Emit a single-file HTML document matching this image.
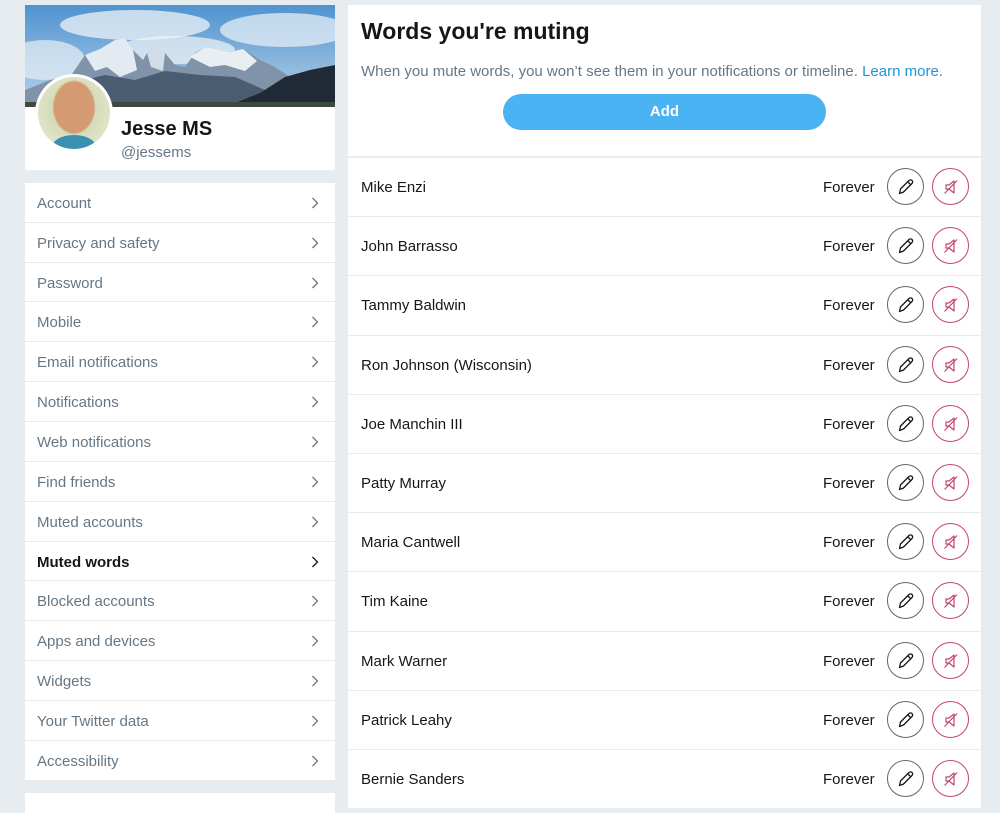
<!DOCTYPE html>
<html><head><meta charset="utf-8"><style>
*{margin:0;padding:0;box-sizing:border-box}
body{width:1000px;height:809px;background:#e6ecf0;font-family:"Liberation Sans",Arial,sans-serif;position:relative;overflow:hidden}
.abs{position:absolute}
.card{position:absolute;background:#fff}
.mi{position:absolute;left:25px;width:310px;background:#fff;font-size:15px;color:#657786;padding-left:12px}
.mi span{position:absolute;left:12px;top:12px}
.mi.b{color:#14171a;font-weight:bold}
.mi svg{position:absolute;right:16px;top:14px}
.row{position:absolute;left:348px;width:633px;background:#fff;font-size:15px;color:#14171a}
.row .n{position:absolute;left:13px;top:21px}
.row .f{position:absolute;left:475px;top:21px}
.row .e,.row .m{position:absolute;top:10px;width:37px;height:37px;border-radius:50%}
.row .e{left:539px;border:1px solid #666}
.row .m{left:584px;border:1px solid #c4446e}
.row svg{position:absolute;left:8px;top:8px}
</style></head><body>
<div class="card" style="left:25px;top:5px;width:310px;height:165px"></div>
<svg class="abs" style="left:25px;top:5px" width="310" height="102" viewBox="0 0 310 102">
<defs><linearGradient id="s" x1="0" y1="0" x2="0" y2="1"><stop offset="0" stop-color="#4f93cf"/><stop offset="1" stop-color="#b9d2e8"/></linearGradient></defs>
<rect width="310" height="102" fill="url(#s)"/>
<ellipse cx="110" cy="20" rx="75" ry="15" fill="#eef3f8" opacity=".75"/>
<ellipse cx="260" cy="25" rx="65" ry="17" fill="#e4edf5" opacity=".75"/>
<ellipse cx="150" cy="45" rx="60" ry="14" fill="#f2f5f8" opacity=".7"/>
<ellipse cx="20" cy="55" rx="40" ry="20" fill="#e8eff6" opacity=".7"/>
<polygon points="0,85 25,75 45,72 60,50 75,44 90,35 100,33 108,45 118,55 122,48 128,42 140,48 150,60 160,62 170,48 180,42 190,44 205,47 218,44 235,55 250,62 265,72 280,75 310,80 310,102 0,102" fill="#8193a8"/>
<polygon points="60,50 75,44 90,35 100,33 108,45 112,65 95,72 82,62 70,66" fill="#e3eaf1"/>
<polygon points="165,52 180,42 205,47 218,44 232,56 220,66 200,60 185,62" fill="#e9eef3"/>
<polygon points="122,48 128,42 140,48 138,66 126,62" fill="#d3dde7"/>
<polygon points="40,80 80,70 110,75 140,66 175,70 210,72 240,85 250,102 20,102" fill="#4a5c71"/>
<polygon points="200,102 235,88 260,72 285,65 310,60 310,102" fill="#1f2a36"/>
<rect y="97" width="310" height="5" fill="#3b4a3d"/>
</svg>
<div class="abs" style="left:35px;top:74px;width:78px;height:78px;border-radius:50%;background:#fff"></div>
<div class="abs" style="left:38px;top:77px;width:72px;height:72px;border-radius:50%;background:radial-gradient(ellipse 30% 38% at 50% 42%,#d49a72 0 92%,transparent 100%),radial-gradient(circle at 50% 45%,#c4cf9f,#dfe4c8 70%);overflow:hidden"><div style="position:absolute;left:14px;top:58px;width:44px;height:24px;background:#3a90b0;border-radius:50%"></div></div>
<div class="abs" style="left:121px;top:118px;font-size:20px;font-weight:bold;color:#14171a">Jesse MS</div>
<div class="abs" style="left:121px;top:144px;font-size:15px;color:#657786">@jessems</div>

<div id="menu"></div>
<div class="card" style="left:25px;top:793px;width:310px;height:20px"></div>

<div class="card" style="left:348px;top:5px;width:633px;height:151px"></div>
<div class="abs" style="left:361px;top:18px;font-size:23px;font-weight:bold;color:#14171a">Words you're muting</div>
<div class="abs" style="left:361px;top:63px;font-size:15px;color:#657786">When you mute words, you won’t see them in your notifications or timeline. <span style="color:#1b95e0">Learn more</span>.</div>
<div class="abs" style="left:503px;top:94px;width:323px;height:36px;border-radius:18px;background:#4ab3f4;color:#fff;font-weight:bold;font-size:15px;text-align:center;line-height:36px">Add</div>

<div id="rows"></div>
<script>
var items=["Account","Privacy and safety","Password","Mobile","Email notifications","Notifications","Web notifications","Find friends","Muted accounts","Muted words","Blocked accounts","Apps and devices","Widgets","Your Twitter data","Accessibility"];
var tops=[183,223,263,302,342,382,422,462,502,542,581,621,661,701,741,780];
var m="";
items.forEach(function(n,i){var t=tops[i],h=tops[i+1]-t-(i==14?0:1);var b=n=="Muted words";
m+='<div class="mi'+(b?' b':'')+'" style="top:'+t+'px;height:'+h+'px"><span>'+n+'</span><svg width="8" height="12"><path d="M1.5 1l5 5-5 5" stroke="'+(b?'#14171a':'#657786')+'" stroke-width="1.3" fill="none"/></svg></div>';});
document.getElementById("menu").innerHTML=m;
var names=["Mike Enzi","John Barrasso","Tammy Baldwin","Ron Johnson (Wisconsin)","Joe Manchin III","Patty Murray","Maria Cantwell","Tim Kaine","Mark Warner","Patrick Leahy","Bernie Sanders"];
var h="";
names.forEach(function(n,i){var t=Math.round(158+i*59.2),nt=Math.round(158+(i+1)*59.2);
h+='<div class="row" style="top:'+t+'px;height:'+(nt-t-1)+'px"><span class="n">'+n+'</span><span class="f">Forever</span>'+
'<div class="e"><svg width="20" height="20" viewBox="0 0 20 20"><path d="M3.5 16.5l1-4.5 8.5-8.5a1.8 1.8 0 0 1 3 3l-8.5 8.5z M12 5l3 3" stroke="#14171a" stroke-width="1.3" fill="none" stroke-linejoin="round"/></svg></div>'+
'<div class="m"><svg width="20" height="20" viewBox="0 0 20 20"><path d="M5 8h3l5-4v12l-5-4H5z M3.5 16.5L16 3.5" stroke="#c4446e" stroke-width="1.2" fill="none" stroke-linejoin="round"/></svg></div></div>';});
document.getElementById("rows").innerHTML=h;
</script>
</body></html>
